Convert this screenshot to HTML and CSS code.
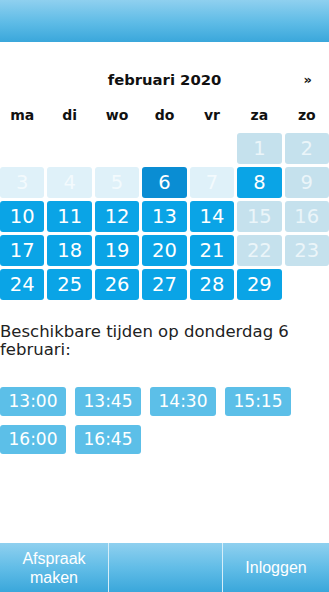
FILE: index.html
```html
<!DOCTYPE html>
<html lang="nl">
<head>
<meta charset="utf-8">
<title>Afspraak maken</title>
<link rel="stylesheet" href="styles.css">
</head>
<body>
<div class="topbar"></div>
<div class="month">
  <span class="month-title">februari 2020</span>
  <span class="next">»</span>
</div>
<div class="weekdays">
  <span>ma</span><span>di</span><span>wo</span><span>do</span><span>vr</span><span>za</span><span>zo</span>
</div>
<div class="cal">
  <span class="blank"></span><span class="blank"></span><span class="blank"></span><span class="blank"></span><span class="blank"></span>
  <span class="day we">1</span><span class="day we">2</span>
  <span class="day off">3</span><span class="day off">4</span><span class="day off">5</span><span class="day sel">6</span><span class="day off">7</span><span class="day av">8</span><span class="day we">9</span>
  <span class="day av">10</span><span class="day av">11</span><span class="day av">12</span><span class="day av">13</span><span class="day av">14</span><span class="day we">15</span><span class="day we">16</span>
  <span class="day av">17</span><span class="day av">18</span><span class="day av">19</span><span class="day av">20</span><span class="day av">21</span><span class="day we">22</span><span class="day we">23</span>
  <span class="day av">24</span><span class="day av">25</span><span class="day av">26</span><span class="day av">27</span><span class="day av">28</span><span class="day av">29</span>
</div>
<p class="avail">Beschikbare tijden op donderdag 6 februari:</p>
<div class="times">
  <span class="time">13:00</span><span class="time">13:45</span><span class="time">14:30</span><span class="time">15:15</span>
  <span class="time">16:00</span><span class="time">16:45</span>
</div>
<div class="footer">
  <div class="fbtn w1">Afspraak<br>maken</div>
  <div class="fbtn w2"></div>
  <div class="fbtn w3">Inloggen</div>
</div>
</body>
</html>
```
FILE: styles.css
```css
html, body {
  margin: 0;
  padding: 0;
  background: #ffffff;
  height: 100%;
}
body {
  font-family: "DejaVu Sans", Verdana, sans-serif;
  color: #111;
  width: 329px;
  height: 592px;
  overflow: hidden;
  position: relative;
}
.topbar {
  height: 42px;
  background: linear-gradient(to bottom, #8fd0ef 0%, #5dbbe6 55%, #3aa7db 100%);
}
.month {
  margin-top: 28px;
  height: 20px;
  line-height: 20px;
  display: grid;
  grid-template-columns: 1fr auto 1fr;
  font-weight: bold;
  font-size: 14.8px;
}
.month-title {
  grid-column: 2;
}
.next {
  grid-column: 3;
  justify-self: end;
  margin-right: 17px;
  font-size: 13px;
}
.weekdays {
  margin-top: 15px;
  height: 20px;
  line-height: 20px;
  display: grid;
  grid-template-columns: repeat(7, 1fr);
  column-gap: 3px;
  font-weight: bold;
  font-size: 14px;
  text-align: center;
}
.cal {
  margin-top: 8px;
  display: grid;
  grid-template-columns: repeat(7, 1fr);
  grid-auto-rows: 31px;
  gap: 3px;
}
.day {
  border-radius: 3px;
  color: #fff;
  font-size: 19.5px;
  line-height: 31px;
  text-align: center;
}
.av { background: #0aa4e6; }
.sel { background: #0a8dd3; }
.off { background: #dff1f9; color: #f3fafd; }
.we { background: #c5e1ed; color: #ebf5f9; }
.avail {
  margin: 23px 0 0 0;
  font-size: 16.5px;
  line-height: 18px;
  color: #222;
}
.times {
  margin-top: 28px;
  display: grid;
  grid-template-columns: repeat(4, 66px);
  column-gap: 9px;
  row-gap: 9px;
}
.time {
  height: 29px;
  line-height: 29px;
  border-radius: 3px;
  background: #5cbfe8;
  color: #fff;
  font-size: 17px;
  text-align: center;
}
.footer {
  position: absolute;
  left: 0;
  right: 0;
  bottom: 0;
  height: 49px;
  display: grid;
  grid-template-columns: 108px 113px 1fr;
  column-gap: 1px;
  background: #d6eef9;
  font-family: "Liberation Sans", Arial, sans-serif;
}
.fbtn {
  background: linear-gradient(to bottom, #8fd0ef 0%, #62bde7 50%, #3aa7db 100%);
  color: #fff;
  font-size: 16px;
  line-height: 19px;
  display: flex;
  align-items: center;
  justify-content: center;
  text-align: center;
}
```
